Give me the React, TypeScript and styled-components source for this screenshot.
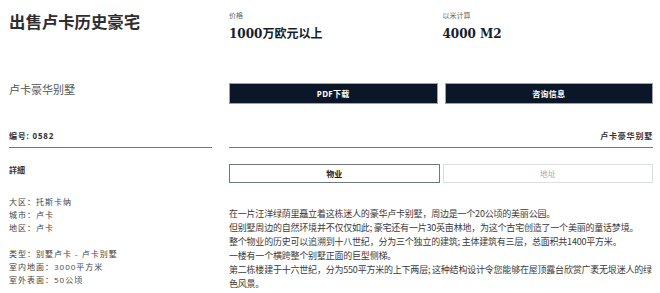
import React from 'react';
import styled, { createGlobalStyle } from 'styled-components';

const GlobalStyle = createGlobalStyle`
  body {
    margin: 0;
    background: #ffffff;
    font-family: 'Open Sans', 'Noto Sans CJK SC', sans-serif;
    color: #333;
  }
`;

const Page = styled.div`
  display: grid;
  grid-template-columns: 203px 424px;
  column-gap: 17px;
  padding: 0 7px 0 9px;
`;

const Title = styled.h1`
  margin: 10px 0 0;
  height: 66px;
  font-size: 16.4px;
  line-height: 22px;
  font-weight: 700;
  color: #2e2e2e;
  font-family: 'Noto Sans CJK SC', sans-serif;
`;

const Pair = styled.div<{ gap?: number }>`
  display: grid;
  grid-template-columns: 1fr 1fr;
  column-gap: ${(p) => p.gap ?? 7}px;
`;

const Stat = styled.div`
  padding-top: 11px;
`;

const StatLabel = styled.div`
  font-size: 7px;
  line-height: 9px;
  color: #666;
  font-family: 'Noto Sans CJK SC', sans-serif;
`;

const StatValue = styled.div`
  margin-top: 5px;
  font-size: 12px;
  line-height: 18px;
  font-weight: 700;
  color: #14202e;
  font-family: 'DejaVu Serif', 'Noto Sans CJK SC', serif;
`;

const Subtitle = styled.div`
  margin-top: 6px;
  font-size: 11px;
  line-height: 14px;
  color: #555;
  font-family: 'Noto Sans CJK SC', sans-serif;
`;

const DarkButton = styled.button`
  margin-top: 7px;
  height: 21px;
  border: 1px solid #9aa3ad;
  background: #0b1729;
  color: #fff;
  font-size: 8px;
  font-weight: 700;
  font-family: 'Open Sans', 'Noto Sans CJK SC', sans-serif;
  letter-spacing: 0.3px;
  cursor: pointer;
`;

const RuleRow = styled.div<{ align?: string }>`
  margin-top: 27px;
  padding-bottom: 6px;
  border-bottom: 1px solid #6f7882;
  font-size: 8px;
  line-height: 10px;
  font-weight: 700;
  letter-spacing: 0.8px;
  color: #333;
  text-align: ${(p) => p.align ?? 'left'};
  font-family: 'Open Sans', 'Noto Sans CJK SC', sans-serif;
`;

const SectionHead = styled.div`
  margin-top: 17px;
  font-size: 8px;
  line-height: 10px;
  font-weight: 700;
  color: #333;
  font-family: 'Noto Sans CJK SC', sans-serif;
`;

const DetailList = styled.div`
  margin-top: 20px;
`;

const DetailLine = styled.div<{ spaced?: boolean }>`
  margin-top: ${(p) => (p.spaced ? 13 : 0)}px;
  font-size: 8px;
  line-height: 13px;
  letter-spacing: 1px;
  color: #444;
  font-family: 'Open Sans', 'Noto Sans CJK SC', sans-serif;
`;

const Tab = styled.button<{ active?: boolean }>`
  height: 19px;
  background: #fff;
  border: ${(p) => (p.active ? '1.5px solid #6f7882' : '1px solid #dcdfe2')};
  color: ${(p) => (p.active ? '#222' : '#aaa')};
  font-size: 8px;
  font-weight: ${(p) => (p.active ? 700 : 400)};
  font-family: 'Noto Sans CJK SC', sans-serif;
  cursor: pointer;
`;

const Tabs = styled(Pair)`
  margin-top: 16px;
`;

const Body = styled.div`
  margin-top: 24px;
  font-size: 9px;
  line-height: 14px;
  letter-spacing: -0.21px;
  color: #3a3a3a;
  font-family: 'Noto Sans CJK SC', sans-serif;

  p {
    margin: 0;
  }
`;

const details = [
  { text: '大区：托斯卡纳' },
  { text: '城市：卢卡' },
  { text: '地区：卢卡' },
  { text: '类型：别墅卢卡 - 卢卡别墅', spaced: true },
  { text: '室内地面：3000平方米' },
  { text: '室外表面：50公顷' },
];

const paragraphs = [
  '在一片汪洋绿荫里矗立着这栋迷人的豪华卢卡别墅，周边是一个20公顷的美丽公园。',
  '但别墅周边的自然环境并不仅仅如此; 豪宅还有一片30英亩林地，为这个古宅创造了一个美丽的童话梦境。',
  '整个物业的历史可以追溯到十八世纪，分为三个独立的建筑; 主体建筑有三层，总面积共1400平方米。',
  '一楼有一个横跨整个别墅正面的巨型侧梯。',
  '第二栋楼建于十六世纪，分为550平方米的上下两层; 这种结构设计令您能够在屋顶露台欣赏广袤无垠迷人的绿色风景。',
];

const App = () => {
  return (
    <>
      <GlobalStyle />
      <Page>
        <Title>出售卢卡历史豪宅</Title>
        <Pair gap={3}>
          <Stat>
            <StatLabel>价格</StatLabel>
            <StatValue>1000万欧元以上</StatValue>
          </Stat>
          <Stat>
            <StatLabel>以米计算</StatLabel>
            <StatValue>4000 M2</StatValue>
          </Stat>
        </Pair>

        <Subtitle>卢卡豪华别墅</Subtitle>
        <Pair>
          <DarkButton>PDF下载</DarkButton>
          <DarkButton>咨询信息</DarkButton>
        </Pair>

        <RuleRow>编号: 0582</RuleRow>
        <RuleRow align='right'>卢卡豪华别墅</RuleRow>

        <div>
          <SectionHead>詳細</SectionHead>
          <DetailList>
            {details.map((d, i) => (
              <DetailLine key={i} spaced={d.spaced}>
                {d.text}
              </DetailLine>
            ))}
          </DetailList>
        </div>
        <div>
          <Tabs gap={3}>
            <Tab active>物业</Tab>
            <Tab>地址</Tab>
          </Tabs>
          <Body>
            {paragraphs.map((p, i) => (
              <p key={i}>{p}</p>
            ))}
          </Body>
        </div>
      </Page>
    </>
  );
};

export default App;
